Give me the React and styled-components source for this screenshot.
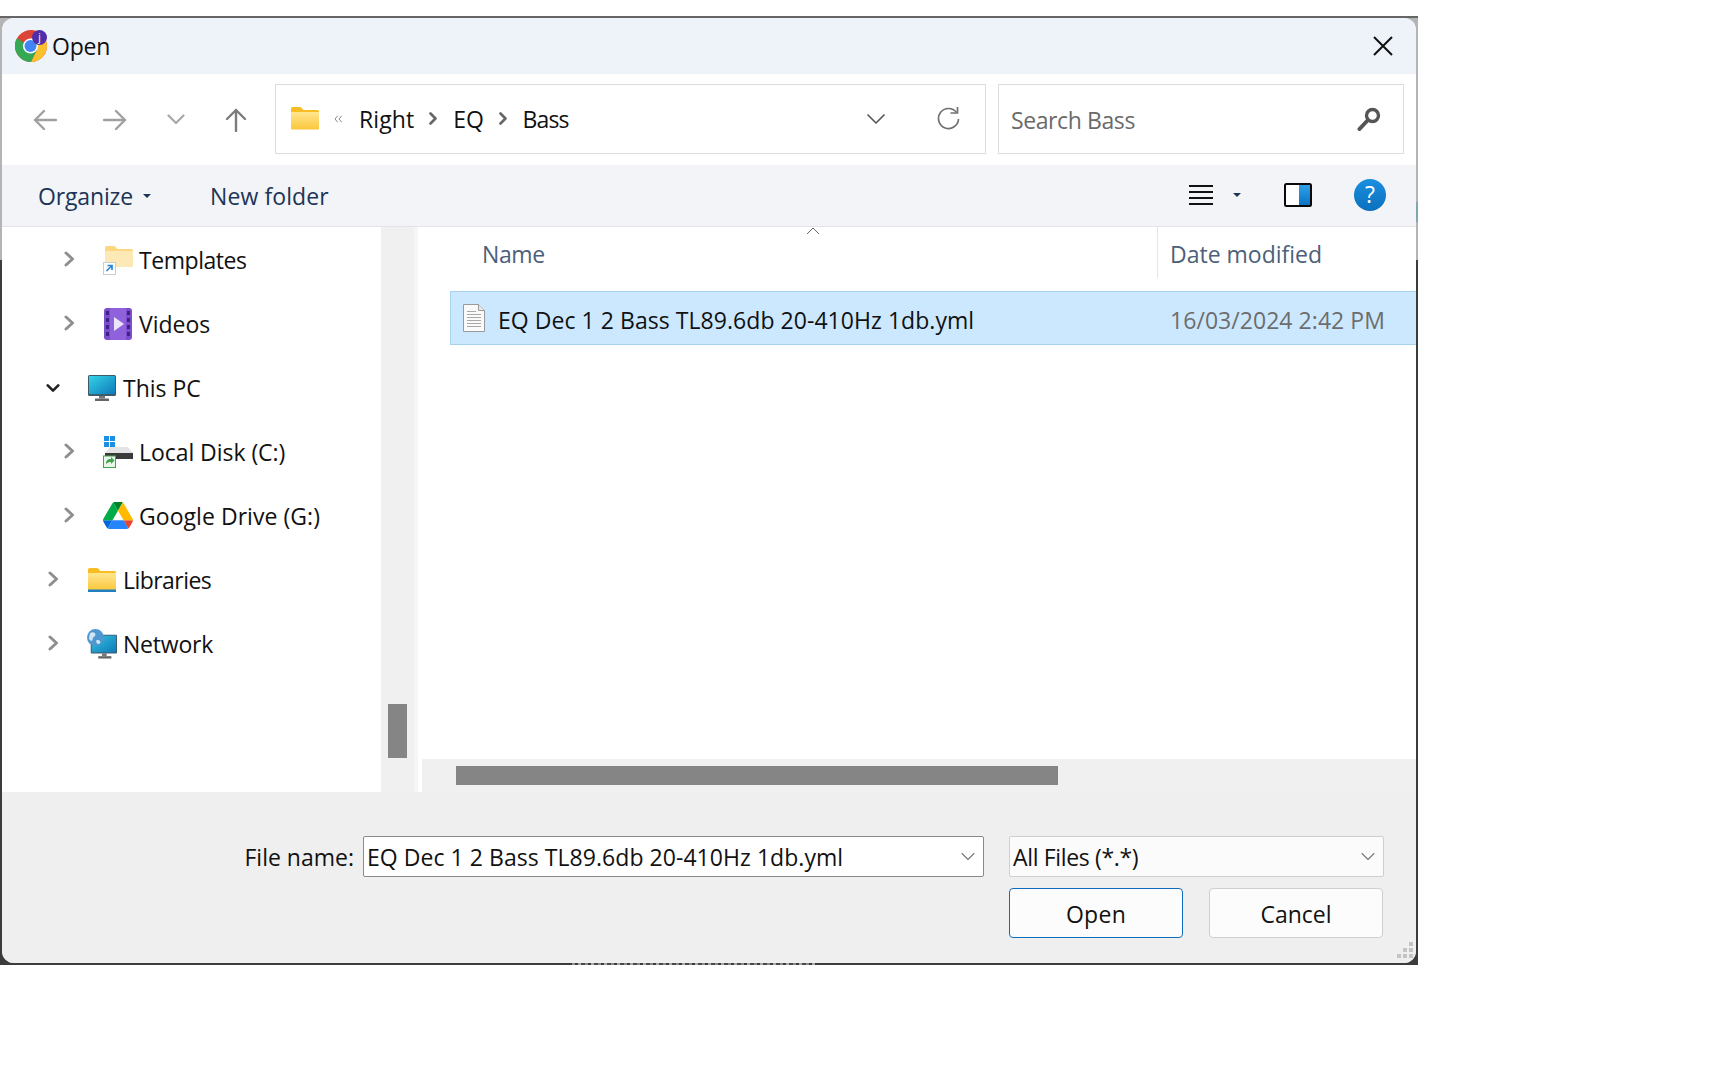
import React from 'react';
import styled, { createGlobalStyle } from 'styled-components';

const Global = createGlobalStyle`
  html, body { margin: 0; padding: 0; background: #fff; }
  body { font-family: "Open Sans", "Noto Sans", sans-serif; color: #111; }
  * { box-sizing: border-box; }
`;

const Page = styled.div`
  width: 1728px;
  height: 1080px;
  padding-top: 16px;
  background: #fff;
  overflow: hidden;
`;
const Dialog = styled.div`
  width: 1418px;
  height: 949px;
  padding: 2px;
  background:
    linear-gradient(#b4b4b4 0 244px, #3c3c3c 244px) left / 50% 100% no-repeat,
    linear-gradient(#b4b4b4 0 186px, #7fa8a8 186px 206px, #b4b4b4 206px 244px, #3c3c3c 244px) right / 50% 100% no-repeat;
  position: relative;
`;
const TopEdge = styled.div`
  position: absolute;
  inset: 0 0 auto 0;
  height: 2px;
  background: #666;
`;
const BottomEdge = styled.div`
  position: absolute;
  inset: auto 0 0 0;
  height: 2px;
  background: #3c3c3c;
`;
const GhostStrip = styled.div`
  position: absolute;
  left: 572px;
  bottom: 0;
  width: 243px;
  height: 2px;
  background: repeating-linear-gradient(90deg, #8a8a8a 0 3px, #3c3c3c 3px 6px, #a8a8a8 6px 9px, #4a4a4a 9px 13px);
`;
const Inner = styled.div`
  height: 100%;
  display: flex;
  flex-direction: column;
  border-radius: 12px;
  overflow: hidden;
  background: #efefef;
  position: relative;
`;
const TitleBar = styled.div`
  height: 56px;
  flex: none;
  background: #eef2f9;
  display: flex;
  align-items: center;
  padding: 0 23px 0 13px;
`;
const AppIcon = styled.div`
  width: 32px;
  height: 32px;
  position: relative;
  flex: none;
  margin-right: 5px;
`;
const Avatar = styled.span`
  position: absolute;
  right: 0;
  top: 0;
  width: 15px;
  height: 15px;
  border-radius: 50%;
  background: #512da8;
  color: #fff;
  font-size: 10px;
  line-height: 14px;
  text-align: center;
`;
const Title = styled.span`
  font-size: 23px;
  letter-spacing: -0.2px;
  flex: 1;
  line-height: 32px;
`;
const NavBar = styled.div`
  height: 91px;
  flex: none;
  background: #fff;
  display: flex;
  align-items: center;
  padding: 0 12px 2px 31px;
`;
const NavBtn = styled.span`
  display: flex;
  align-items: center;
  justify-content: center;
  flex: none;
  width: ${p => p.$w}px;
  margin-right: ${p => p.$mr || 0}px;
  margin-top: ${p => p.$mt || 0}px;
`;
const AddressBox = styled.div`
  width: 711px;
  height: 70px;
  margin-left: 28px;
  border: 1.5px solid #dcdcdc;
  display: flex;
  align-items: center;
  padding-left: 15px;
  font-size: 23px;
  flex: none;
`;
const Crumb = styled.span`
  line-height: 32px;
  margin-top: 1px;
  letter-spacing: ${p => p.$ls || 0}px;
`;
const CrumbSep = styled.span`
  display: flex;
  margin: 0 ${p => p.$r}px 0 ${p => p.$l}px;
`;
const Spacer = styled.span`
  flex: 1;
`;
const SearchBox = styled.div`
  width: 406px;
  height: 70px;
  margin-left: 12px;
  border: 1.5px solid #dcdcdc;
  display: flex;
  align-items: center;
  justify-content: space-between;
  padding: 0 22px 0 12px;
  font-size: 23px;
  letter-spacing: -0.4px;
  color: #6a6a6a;
  flex: none;
`;
const SearchText = styled.span`
  margin-top: 2px;
`;
const CommandBar = styled.div`
  height: 62px;
  flex: none;
  background: #f3f4f7;
  border-bottom: 1px solid #e3e4e6;
  display: flex;
  align-items: center;
  padding: 0 30px 2px 36px;
  font-size: 23px;
  color: #1c3557;
`;
const CmdLabel = styled.span`
  display: flex;
  align-items: center;
  margin-top: 2px;
  letter-spacing: ${p => p.$ls || 0}px;
  margin-left: ${p => p.$ml || 0}px;
`;
const CmdIcon = styled.span`
  display: flex;
  align-items: center;
  flex: none;
  margin-right: ${p => p.$mr || 0}px;
`;
const Caret = styled.span`
  width: 0;
  height: 0;
  border-left: 4px solid transparent;
  border-right: 4px solid transparent;
  border-top: 4px solid #1c3557;
  margin-left: ${p => p.$ml || 10}px;
  margin-right: ${p => p.$mr || 0}px;
`;
const Body = styled.div`
  height: 565px;
  flex: none;
  display: flex;
  background: #fff;
`;
const TreePane = styled.div`
  width: 379px;
  flex: none;
  padding-top: 1px;
  background: #fff;
`;
const TreeRow = styled.div`
  height: 64px;
  display: flex;
  align-items: center;
  padding-left: ${p => (p.$level === 2 ? 60 : 44)}px;
  font-size: 23px;
  letter-spacing: ${p => p.$ls}px;
  color: #111;
`;
const Twist = styled.span`
  width: 14px;
  flex: none;
  display: flex;
  justify-content: center;
  margin-top: ${p => (p.$open ? 0 : -3)}px;
`;
const TreeIcon = styled.span`
  width: 30px;
  height: 34px;
  margin-left: 27px;
  margin-right: 6px;
  flex: none;
  display: flex;
  align-items: center;
  justify-content: center;
  margin-top: -1px;
`;
const VTrack = styled.div`
  width: 33px;
  flex: none;
  background: #f0f0f0;
  display: flex;
  align-items: flex-end;
  justify-content: center;
  padding-bottom: 34px;
`;
const VThumb = styled.div`
  width: 19px;
  height: 54px;
  background: #858585;
`;
const Gutter = styled.div`
  width: 8px;
  flex: none;
  background: linear-gradient(90deg, #f6f6f6 0 4px, #fff 4px);
`;
const ListPane = styled.div`
  flex: 1;
  min-width: 0;
  display: flex;
  flex-direction: column;
  position: relative;
`;
const ListHeader = styled.div`
  height: 51px;
  flex: none;
  display: grid;
  grid-template-columns: 735px 1fr;
  font-size: 23px;
`;
const HeadName = styled.div`
  padding: 2px 0 0 60px;
  color: #4c607a;
  display: flex;
  align-items: center;
  position: relative;
  letter-spacing: -0.4px;
`;
const SortMark = styled.span`
  position: absolute;
  left: 384px;
  top: 0;
  display: flex;
`;
const HeadDate = styled.div`
  border-left: 1px solid #e5e5e5;
  padding: 2px 0 0 12px;
  color: #4c607a;
  display: flex;
  align-items: center;
`;
const ListBody = styled.div`
  flex: 1;
  padding: 13px 0 0 28px;
`;
const FileRow = styled.div`
  height: 54px;
  background: #cce8ff;
  border: 1px solid #a6d2f0;
  border-right: 0;
  display: grid;
  grid-template-columns: 706px 1fr;
  align-items: center;
  font-size: 23px;
  letter-spacing: 0.05px;
`;
const NameCell = styled.div`
  display: flex;
  align-items: center;
  padding-left: 12px;
  color: #111;
`;
const NameText = styled.span`
  margin-top: 4px;
`;
const FileGlyph = styled.span`
  display: flex;
  margin-right: 13px;
`;
const DateCell = styled.div`
  color: #6d6d6d;
  padding: 4px 0 0 13px;
  white-space: nowrap;
`;
const HTrack = styled.div`
  height: 33px;
  flex: none;
  background: #f0f0f0;
  padding: 7px 0 0 34px;
`;
const HThumb = styled.div`
  width: 602px;
  height: 19px;
  background: #858585;
`;
const Footer = styled.div`
  flex: 1;
  background: #efefef;
  padding: 44px 32px 0 0;
  position: relative;
`;
const FieldRow = styled.div`
  display: flex;
  justify-content: flex-end;
  align-items: center;
  font-size: 23px;
`;
const FieldLabel = styled.span`
  margin-right: 9px;
  color: #111;
`;
const Combo = styled.div`
  width: ${p => p.$w}px;
  height: 41px;
  margin-left: ${p => p.$ml || 0}px;
  background: ${p => p.$flat ? '#fbfbfb' : '#fff'};
  border: 1px solid ${p => p.$flat ? '#cfcfcf' : '#8a8a8a'};
  border-radius: 2px;
  display: flex;
  align-items: center;
  justify-content: space-between;
  padding: 0 8px 0 3px;
  color: #111;
  letter-spacing: ${p => p.$ls}px;
`;
const ButtonRow = styled.div`
  display: flex;
  justify-content: flex-end;
  gap: 26px;
  margin-top: 11px;
  padding-right: 1px;
`;
const Btn = styled.button`
  width: 174px;
  height: 50px;
  background: #fcfcfc;
  border: 1px solid ${p => p.$primary ? '#0f6cbd' : '#cfcfcf'};
  border-radius: 4px;
  font-family: inherit;
  font-size: 23px;
  letter-spacing: ${p => p.$ls || 0}px;
  color: #111;
  padding: 2px 0 0;
`;
const Grip = styled.span`
  position: absolute;
  right: 2px;
  bottom: 3px;
  display: flex;
`;

const Line = ({ d, w, h, vb, c = '#8a8a8a', sw = 2.4, cap = 'round' }) => (
  <svg width={w} height={h} viewBox={vb || `0 0 ${w} ${h}`} fill="none" stroke={c} strokeWidth={sw} strokeLinecap={cap} strokeLinejoin="round">
    <path d={d} />
  </svg>
);

const Right = () => <Line w={11} h={16} d="M2 2l6.500 6L2 14" c="#8f8f8f" sw={3} />;
const Down = () => <Line w={16} h={11} d="M2 2l6 6 6-6" c="#222" sw={3} />;
const Small = () => <Line w={14} h={9} d="M1 1.500l6 6 6-6" c="#777" sw={1.100} />;

const ChromeIcon = () => (
  <svg width="32" height="32" viewBox="0 0 32 32">
    <circle cx="16" cy="16" r="16" fill="#db4437" />
    <path d="M2.100 8A16 16 0 0 0 16 32L22 20 10 14Z" fill="#34a853" />
    <path d="M16 32A16 16 0 0 0 32 16 16 16 0 0 0 29.800 8H16L22 20Z" fill="#fbc02d" />
    <circle cx="15.500" cy="16" r="7.600" fill="#fff" />
    <circle cx="15.500" cy="16" r="6" fill="#4285f4" />
  </svg>
);
const Folder = ({ lib }) => (
  <svg width="28" height="26" viewBox="0 0 28 26">
    <defs>
      <linearGradient id="fd" x1="0" y1="0" x2="0" y2="1">
        <stop offset="0" stopColor="#ffe68f" />
        <stop offset="1" stopColor="#fcc63a" />
      </linearGradient>
    </defs>
    <path d="M0 2.500A1.500 1.500 0 0 1 1.500 1h8l3 3h14A1.500 1.500 0 0 1 28 5.500V7H0Z" fill="#f9bd24" />
    <path d="M0 6h28v16.500a1 1 0 0 1-1 1H1a1 1 0 0 1-1-1Z" fill="url(#fd)" />
    {lib && <rect x="0" y="22.500" width="28" height="2.500" fill="#1f7fbf" />}
  </svg>
);
const Templates = () => (
  <svg width="30" height="30" viewBox="0 0 30 30">
    <path d="M2 2.500A1.500 1.500 0 0 1 3.500 1h8l3 3h14A1.500 1.500 0 0 1 30 5.500V7H2Z" fill="#fbd87f" />
    <path d="M2 6h28v16H2Z" fill="#fde9b5" />
    <rect x="0.500" y="17.500" width="12" height="12" fill="#fff" stroke="#ccc" />
    <path d="M3.500 26l5-5M4.500 20.500h4.500V25" stroke="#2b88d8" strokeWidth="1.700" fill="none" />
  </svg>
);
const Videos = () => (
  <svg width="28" height="32" viewBox="0 0 28 32">
    <rect width="28" height="32" rx="3" fill="#7c4dcf" />
    <rect x="6" width="16" height="32" fill="#8f62dc" />
    {[3, 10, 17, 24].map(y => (
      <g key={y}>
        <rect x="2" y={y} width="3" height="4" fill="#3d2480" />
        <rect x="23" y={y} width="3" height="4" fill="#3d2480" />
      </g>
    ))}
    <path d="M10 9l10 7-10 7Z" fill="#ece4fb" />
  </svg>
);
const Monitor = () => (
  <svg width="28" height="26" viewBox="0 0 28 26">
    <defs>
      <linearGradient id="mon" x1="0" y1="0" x2="1" y2="1">
        <stop offset="0" stopColor="#33d3e8" />
        <stop offset="1" stopColor="#0f79b8" />
      </linearGradient>
    </defs>
    <rect width="28" height="21" rx="1.500" fill="#3f5a68" />
    <rect x="1" y="1" width="26" height="18" fill="url(#mon)" />
    <rect x="11" y="21" width="6" height="2.500" fill="#777" />
    <rect x="7" y="23.500" width="14" height="2.500" fill="#666" />
  </svg>
);
const Disk = () => (
  <svg width="30" height="32" viewBox="0 0 30 32">
    <g fill="#1a8fe3">
      <rect x="1" y="0" width="5" height="5" />
      <rect x="7" y="0" width="5" height="5" />
      <rect x="1" y="6" width="5" height="5" />
      <rect x="7" y="6" width="5" height="5" />
    </g>
    <path d="M2 17l5-6h18l5 6Z" fill="#e4e4e4" />
    <rect x="2" y="17" width="28" height="6" fill="#3a3a3a" />
    <rect x="0.500" y="20" width="12" height="11.500" fill="#e8f6e8" stroke="#3fa34d" />
    <path d="M3 28c0-4 2-5 5-5v-2l3.500 3.500L8 28v-2c-2 0-3.500 .5-5 2Z" fill="#3fa34d" />
  </svg>
);
const Drive = () => (
  <svg width="30" height="27" viewBox="0 0 87.300 78">
    <path d="m6.600 66.850 3.850 6.650c.8 1.400 1.950 2.500 3.300 3.300l13.750-23.800h-27.500c0 1.550.4 3.100 1.200 4.500z" fill="#0066da" />
    <path d="m43.650 25-13.750-23.800c-1.350.8-2.500 1.900-3.300 3.300l-25.400 44a9.060 9.060 0 0 0 -1.200 4.500h27.500z" fill="#00ac47" />
    <path d="m73.550 76.800c1.350-.8 2.500-1.900 3.300-3.300l1.600-2.750 7.650-13.250c.8-1.400 1.200-2.950 1.200-4.500h-27.502l5.852 11.500z" fill="#ea4335" />
    <path d="m43.650 25 13.750-23.800c-1.350-.8-2.900-1.200-4.500-1.200h-18.500c-1.600 0-3.150.45-4.500 1.200z" fill="#00832d" />
    <path d="m59.800 53h-32.300l-13.750 23.800c1.350.8 2.900 1.200 4.500 1.200h50.800c1.600 0 3.150-.45 4.500-1.200z" fill="#2684fc" />
    <path d="m73.400 26.500-12.700-22c-.8-1.400-1.950-2.500-3.300-3.300l-13.750 23.800 16.150 28h27.450c0-1.550-.4-3.100-1.200-4.500z" fill="#ffba00" />
  </svg>
);
const Network = () => (
  <svg width="32" height="32" viewBox="0 0 32 32">
    <defs>
      <linearGradient id="net" x1="0" y1="0" x2="1" y2="1">
        <stop offset="0" stopColor="#35c3e0" />
        <stop offset="1" stopColor="#0e7ab8" />
      </linearGradient>
    </defs>
    <rect x="4" y="6" width="28" height="20" rx="1" fill="#3f5a68" />
    <rect x="5" y="7" width="26" height="18" fill="url(#net)" />
    <rect x="16" y="26" width="5" height="3" fill="#777" />
    <rect x="12" y="29" width="14" height="2.500" fill="#666" />
    <circle cx="9" cy="9" r="9" fill="#4f97cf" />
    <path d="M3 5c3-3 6-1 6 1s-3 2-3 5-3 1-4-1ZM10 12c3-1 5 1 4 3s-5 1-4-3Z" fill="#cfe6f5" />
  </svg>
);
const FileIcon = () => (
  <svg width="22" height="28" viewBox="0 0 22 28">
    <path d="M.5.5h15l6 6v21H.5Z" fill="#fafafa" stroke="#9a9a9a" />
    <path d="M15.500.5v6h6" fill="#e8e8e8" stroke="#9a9a9a" />
    <path d="M4 7.500h9M4 10.500h14M4 13.500h14M4 16.500h14M4 19.500h14M4 22.500h14" stroke="#a8a8a8" />
  </svg>
);

const CrumbChevron = () => (
  <CrumbSep $l={15} $r={16}>
    <Line w={8} h={13} d="M1.500 1.500L6.500 6.500l-5 5" c="#666" sw={2.600} />
  </CrumbSep>
);

const tree = [
  { level: 2, label: 'Templates', ls: -0.45, icon: <Templates /> },
  { level: 2, label: 'Videos', ls: 0, icon: <Videos /> },
  { level: 1, label: 'This PC', ls: 0, icon: <Monitor />, open: true },
  { level: 2, label: 'Local Disk (C:)', ls: -0.05, icon: <Disk /> },
  { level: 2, label: 'Google Drive (G:)', ls: 0.05, icon: <Drive /> },
  { level: 1, label: 'Libraries', ls: -0.55, icon: <Folder lib /> },
  { level: 1, label: 'Network', ls: -0.2, icon: <Network /> },
];

export default function App() {
  return (
    <>
      <Global />
      <Page>
        <Dialog>
          <TopEdge />
          <Inner>
            <TitleBar>
              <AppIcon>
                <ChromeIcon />
                <Avatar>j</Avatar>
              </AppIcon>
              <Title>Open</Title>
              <Line w={20} h={20} d="M1 1l18 18M19 1L1 19" c="#111" sw={2} cap="butt" />
            </TitleBar>
            <NavBar>
              <NavBtn $w={24} $mr={46} $mt={2}>
                <Line w={24} h={22} d="M2 11h21M11 2l-9 9 9 9" c="#a0a0a0" sw={2.400} />
              </NavBtn>
              <NavBtn $w={24} $mr={40} $mt={2}>
                <Line w={24} h={22} d="M1 11h21M13 2l9 9-9 9" c="#a0a0a0" sw={2.400} />
              </NavBtn>
              <NavBtn $w={18} $mr={40} $mt={2}>
                <Line w={18} h={11} d="M1.500 1.500L9 9l7.500-7.500" c="#a8a8a8" sw={2.200} />
              </NavBtn>
              <NavBtn $w={22} $mt={2}>
                <Line w={22} h={24} d="M11 23V2M2 11l9-9 9 9" c="#7c7c7c" sw={2.400} />
              </NavBtn>
              <AddressBox>
                <Folder />
                <CrumbSep $l={15} $r={17}>
                  <Line w={8} h={8} d="M3.500 1L1 4l2.500 3M7.500 1L5 4l2.500 3" c="#888" sw={1} />
                </CrumbSep>
                <Crumb $ls={0.1}>Right</Crumb>
                <CrumbChevron />
                <Crumb $ls={-0.2}>EQ</Crumb>
                <CrumbChevron />
                <Crumb $ls={-0.9}>Bass</Crumb>
                <Spacer />
                <NavBtn $w={20} $mr={51}>
                  <Line w={20} h={11} d="M1.500 1.500l8.500 8.500 8.500-8.500" c="#555" sw={1.600} cap="butt" />
                </NavBtn>
                <NavBtn $w={23} $mr={25}>
                  <svg width="23" height="23" viewBox="0 0 23 23" fill="none" stroke="#707070" strokeWidth="1.700">
                    <path d="M19.500 5.500A10 10 0 1 0 21.500 12" />
                    <path d="M13.500 6h7V0" strokeWidth="1.700" />
                  </svg>
                </NavBtn>
              </AddressBox>
              <SearchBox>
                <SearchText>Search Bass</SearchText>
                <svg width="24" height="24" viewBox="0 0 24 24" fill="none" stroke="#555">
                  <circle cx="15.500" cy="8.500" r="6" strokeWidth="3.400" />
                  <path d="M10.500 13.500L2.500 22" strokeWidth="4" strokeLinecap="round" />
                </svg>
              </SearchBox>
            </NavBar>
            <CommandBar>
              <CmdLabel $ls={-0.15}>Organize<Caret /></CmdLabel>
              <CmdLabel $ml={59} $ls={0.1}>New folder</CmdLabel>
              <Spacer />
              <CmdIcon>
                <Line w={24} h={20} d="M0 1h24M0 7h24M0 13h24M0 19h24" c="#111" sw={2} cap="butt" />
                <Caret $ml={20} $mr={43} />
              </CmdIcon>
              <CmdIcon $mr={42}>
                <svg width="28" height="24" viewBox="0 0 28 24">
                  <defs>
                    <linearGradient id="pv" x1="0" y1="0" x2="0" y2="1">
                      <stop offset="0" stopColor="#2da1e8" />
                      <stop offset="1" stopColor="#0c74c8" />
                    </linearGradient>
                  </defs>
                  <rect x="1" y="1" width="26" height="22" rx="1.500" fill="#fff" stroke="#0a0a0a" strokeWidth="2" />
                  <rect x="15" y="2" width="11" height="20" fill="url(#pv)" />
                </svg>
              </CmdIcon>
              <CmdIcon>
                <svg width="32" height="32" viewBox="0 0 32 32">
                  <defs>
                    <linearGradient id="hp" x1="0" y1="0" x2="0" y2="1">
                      <stop offset="0" stopColor="#1b8fe0" />
                      <stop offset="1" stopColor="#0a70bd" />
                    </linearGradient>
                  </defs>
                  <circle cx="16" cy="16" r="16" fill="url(#hp)" />
                  <text x="16" y="24" textAnchor="middle" fontSize="23" fontFamily="Open Sans" fill="#fff">?</text>
                </svg>
              </CmdIcon>
            </CommandBar>
            <Body>
              <TreePane>
                {tree.map(t => (
                  <TreeRow key={t.label} $level={t.level} $ls={t.ls}>
                    <Twist $open={t.open}>{t.open ? <Down /> : <Right />}</Twist>
                    <TreeIcon>{t.icon}</TreeIcon>
                    {t.label}
                  </TreeRow>
                ))}
              </TreePane>
              <VTrack><VThumb /></VTrack>
              <Gutter />
              <ListPane>
                <ListHeader>
                  <HeadName>
                    Name
                    <SortMark>
                      <svg width="14" height="10" viewBox="0 0 14 10" fill="none" stroke="#666" strokeWidth="1">
                        <path d="M1 7l6-6 6 6" />
                      </svg>
                    </SortMark>
                  </HeadName>
                  <HeadDate>Date modified</HeadDate>
                </ListHeader>
                <ListBody>
                  <FileRow>
                    <NameCell>
                      <FileGlyph><FileIcon /></FileGlyph>
                      <NameText>EQ Dec 1 2 Bass TL89.6db 20-410Hz 1db.yml</NameText>
                    </NameCell>
                    <DateCell>16/03/2024 2:42 PM</DateCell>
                  </FileRow>
                </ListBody>
                <HTrack><HThumb /></HTrack>
              </ListPane>
            </Body>
            <Footer>
              <FieldRow>
                <FieldLabel>File name:</FieldLabel>
                <Combo $w={621} $ls={0.05}>
                  EQ Dec 1 2 Bass TL89.6db 20-410Hz 1db.yml
                  <Small />
                </Combo>
                <Combo $w={375} $ml={25} $flat $ls={-0.35}>
                  All Files (*.*)
                  <Small />
                </Combo>
              </FieldRow>
              <ButtonRow>
                <Btn $primary $ls={0.3}>Open</Btn>
                <Btn>Cancel</Btn>
              </ButtonRow>
              <Grip>
                <svg width="18" height="18" viewBox="0 0 18 18" fill="#c4c4c4">
                  <rect x="13" y="0" width="4" height="4" />
                  <rect x="7" y="6" width="4" height="4" />
                  <rect x="13" y="6" width="4" height="4" />
                  <rect x="1" y="12" width="4" height="4" />
                  <rect x="7" y="12" width="4" height="4" />
                  <rect x="13" y="12" width="4" height="4" />
                </svg>
              </Grip>
            </Footer>
          </Inner>
          <BottomEdge />
          <GhostStrip />
        </Dialog>
      </Page>
    </>
  );
}
